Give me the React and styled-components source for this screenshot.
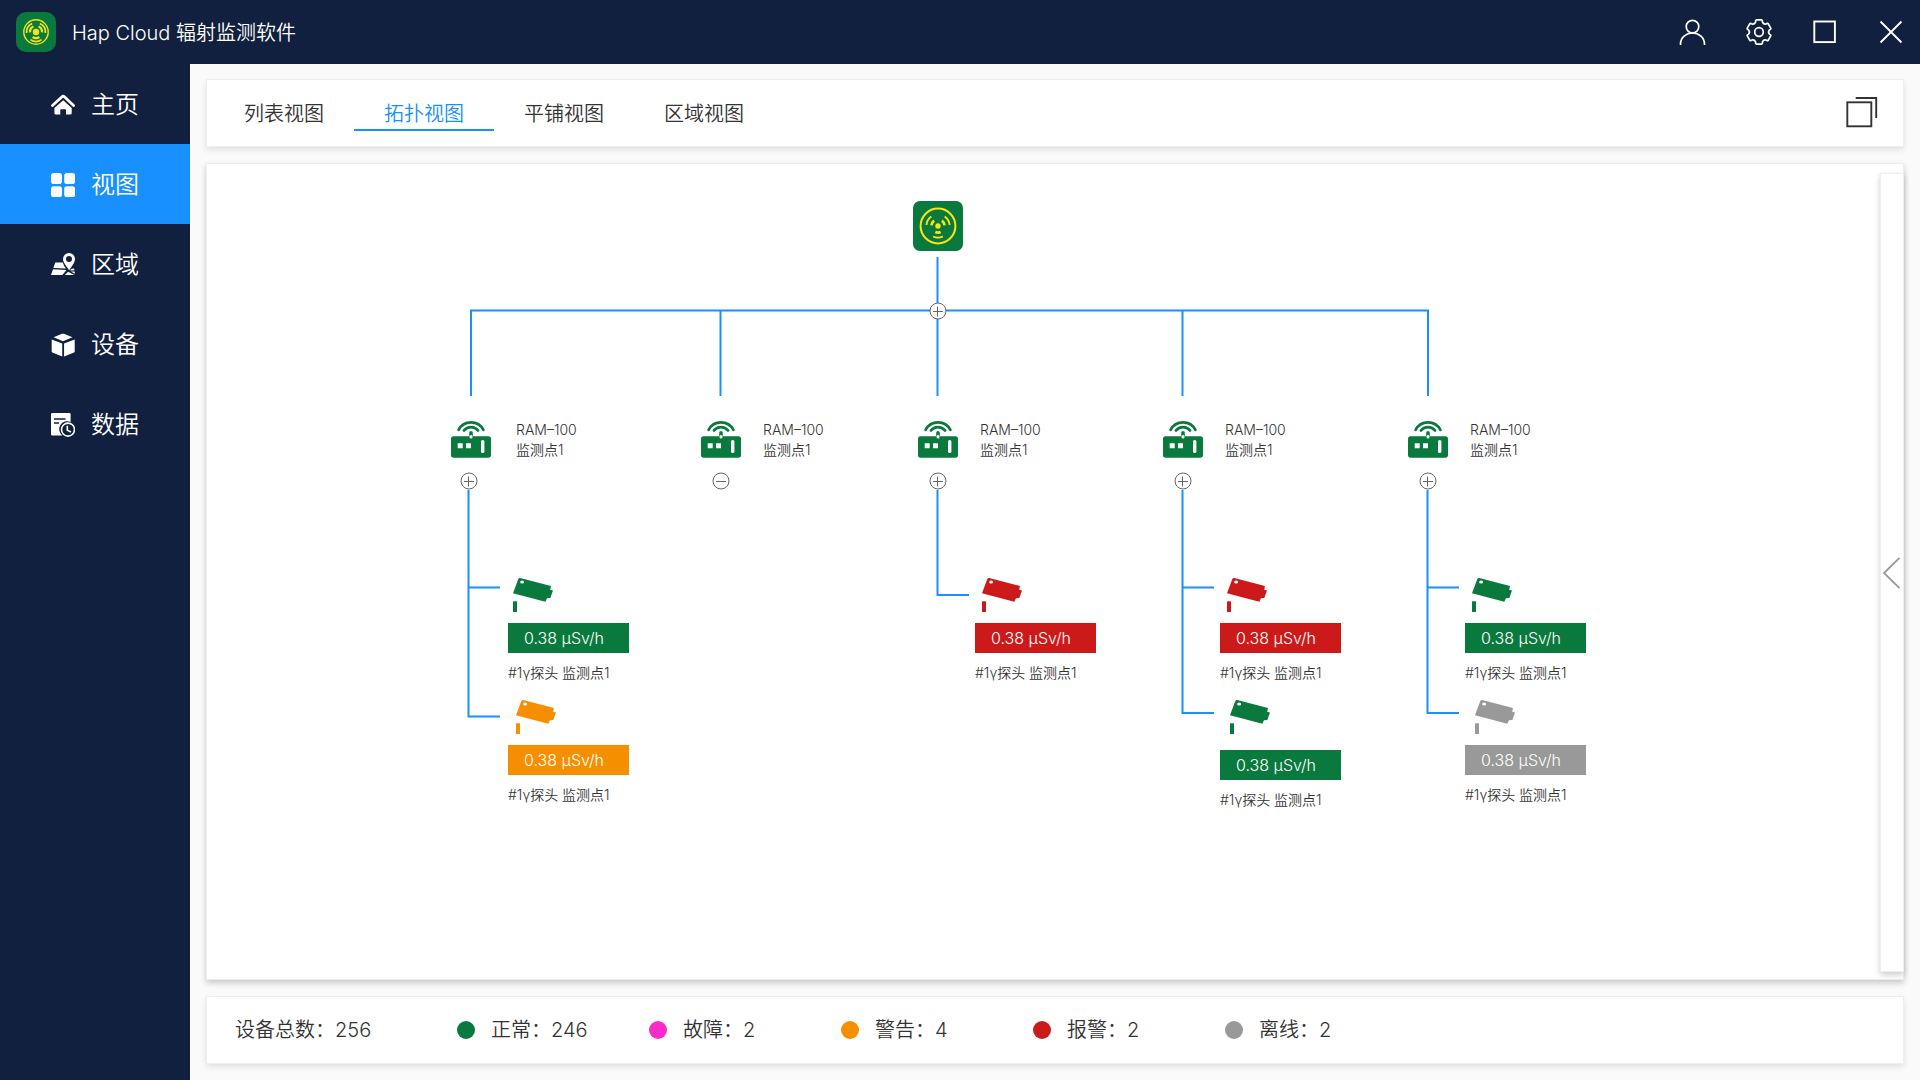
import React, { useState } from 'react';
import styled, { createGlobalStyle } from 'styled-components';

const colors = {
  navy: '#11203e',
  blue: '#1890ff',
  text: '#333333',
  normal: '#0a793e',
  fault: '#f82bc8',
  warning: '#f58f00',
  alarm: '#cc1a1a',
  offline: '#999999'
};

const GlobalStyle = createGlobalStyle`
  *, *::before, *::after {
    box-sizing: border-box;
  }

  body {
    margin: 0;
    color: ${colors.text};
    background: #fafafa;
    font-family: Inter, 'Noto Sans CJK SC', sans-serif;
    font-weight: 350;
  }

  button {
    padding: 0;
    border: 0;
    background: none;
    color: inherit;
    font: inherit;
    cursor: pointer;
  }

  svg {
    display: block;
  }
`;

const Page = styled.div`
  display: flex;
  flex-direction: column;
  min-height: 100vh;
`;

const Header = styled.header`
  display: flex;
  align-items: center;
  height: 64px;
  padding: 0 16px;
  color: white;
  background: ${colors.navy};
`;

const Title = styled.h1`
  flex: 1;
  margin: 0 0 0 16px;
  padding-top: 1px;
  font-size: 20px;
  line-height: 28px;
  font-weight: inherit;
`;

const WindowButtons = styled.div`
  display: flex;
  align-items: center;
  gap: 40px;
`;

const Body = styled.div`
  display: flex;
  flex: 1;
`;

const Sidebar = styled.nav`
  flex: none;
  width: 190px;
  background: ${colors.navy};
`;

const SidebarLink = styled.a`
  display: flex;
  align-items: center;
  gap: 16px;
  height: 80px;
  padding-top: 2px;
  padding-left: 51px;
  color: white;
  background: ${props => (props.$active ? colors.blue : 'transparent')};
  font-size: 24px;
  line-height: 32px;
  text-decoration: none;
`;

const Main = styled.main`
  display: flex;
  flex: 1;
  flex-direction: column;
  gap: 16px;
  min-width: 0;
  padding: 15px 16px 16px;
`;

const Card = styled.section`
  border: 1px solid #eeeeee;
  background: white;
  box-shadow: 0 3px 6px rgba(0, 0, 0, 0.1);
`;

const TabBar = styled(Card)`
  display: flex;
  align-items: center;
  justify-content: space-between;
  height: 68px;
  padding: 0 25px 0 7px;
`;

const Tabs = styled.div`
  display: flex;
`;

const Tab = styled.button`
  width: 140px;
  height: 36px;
  padding-top: 3px;
  border-bottom: 2px solid
    ${props => (props.$active ? colors.blue : 'transparent')};
  color: ${props => (props.$active ? colors.blue : colors.text)};
  font-size: 20px;
  line-height: 28px;
`;

const CanvasCard = styled(Card)`
  display: flex;
  flex: 1;
  box-shadow: 0 3px 6px rgba(0, 0, 0, 0.2);
`;

const Canvas = styled.div`
  position: relative;
  flex: 1;
  min-height: 660px;
`;

const Links = styled.svg`
  position: absolute;
  left: 0;
  top: 0;
`;

const Node = styled.div`
  position: absolute;
  left: ${props => props.$x}px;
  top: ${props => props.$y}px;
`;

const Station = styled(Node)`
  display: flex;
  gap: ${props => props.$gap}px;
`;

const StationName = styled.div`
  font-size: 14px;
  line-height: 20px;
  white-space: nowrap;
`;

const Toggle = styled.button`
  position: absolute;
  left: ${props => props.$x - 9}px;
  top: ${props => props.$y - 9}px;
`;

const Probe = styled(Node)`
  width: 121px;
`;

const ProbeIcon = styled.div`
  height: ${props => props.$height}px;
  padding-left: ${props => props.$indent}px;
`;

const Reading = styled.div`
  padding-left: 16px;
  color: white;
  background: ${props => props.$color};
  font-size: 16px;
  line-height: 30px;
`;

const ProbeName = styled.div`
  margin-top: 10px;
  font-size: 14px;
  line-height: 20px;
  white-space: nowrap;
`;

const Drawer = styled.button`
  display: flex;
  align-items: center;
  justify-content: center;
  width: 24px;
  margin: 9px -1px 7px 0;
  border: 1px solid #eeeeee;
  background: white;
  box-shadow: 0 3px 6px rgba(0, 0, 0, 0.2);
`;

const StatusBar = styled(Card)`
  display: flex;
  align-items: center;
  height: 68px;
  padding-left: 28px;
  font-size: 20px;
  line-height: 28px;
`;

const Total = styled.div`
  width: 222px;
`;

const Status = styled.div`
  display: flex;
  align-items: center;
  gap: 16px;
  width: 192px;
`;

const Dot = styled.span`
  width: 18px;
  height: 18px;
  border-radius: 50%;
  background: ${props => props.$color};
`;

// arc around (c, c), angles in degrees
const arc = (c, r, from, to) => {
  const rad = Math.PI / 180;
  const point = a =>
    `${(c + r * Math.cos(a * rad)).toFixed(2)} ${(c + r * Math.sin(a * rad)).toFixed(2)}`;
  return `M${point(from)}A${r} ${r} 0 0 1 ${point(to)}`;
};

const Waves = ({ c, r, width, spread }) =>
  [90, 210, 330].map(a => (
    <path key={a} d={arc(c, r, a - spread, a + spread)} strokeWidth={width} />
  ));

const SmallLogo = () => (
  <svg width='40' height='40' fill='none' stroke='#f5e416'>
    <rect width='40' height='40' rx='10' fill={colors.normal} stroke='none' />
    <circle cx='20' cy='20' r='12.2' strokeWidth='1.4' />
    <circle cx='20' cy='20' r='3.2' fill='#f5e416' stroke='none' />
    <Waves c={20} r={6} width={2.2} spread={34} />
    <Waves c={20} r={9.4} width={1.7} spread={36} />
  </svg>
);

const LargeLogo = () => (
  <svg width='50' height='50' fill='none' stroke='#fbe512'>
    <rect width='50' height='50' rx='7' fill={colors.normal} stroke='none' />
    <circle cx='25' cy='25' r='17.4' strokeWidth='2' />
    <circle cx='25' cy='25' r='2.7' fill='#fbe512' stroke='none' />
    <Waves c={25} r={6.6} width={2.6} spread={24} />
    <Waves c={25} r={11.6} width={1.9} spread={25} />
  </svg>
);

const UserIcon = () => (
  <svg width='27' height='27' fill='none' stroke='white' strokeWidth='1.7'>
    <circle cx='13.5' cy='7.6' r='6.3' />
    <path d='M1.5 26v-.8C1.5 18.7 7 14 13.5 14s12 4.700 12 11.200v.8' />
  </svg>
);

const gearPath = () => {
  const at = (deg, r) => {
    const a = (deg * Math.PI) / 180;
    return `${(13 + r * Math.cos(a)).toFixed(2)} ${(13 + r * Math.sin(a)).toFixed(2)}`;
  };
  const teeth = [-90, -30, 30, 90, 150, 210].map(
    (t, i) =>
      `${i ? 'L' : 'M'}${at(t - 13, 12.4)}L${at(t + 13, 12.4)}Q${at(t + 18, 12)} ${at(t + 18, 10.8)}Q${at(t + 30, 8.6)} ${at(t + 42, 10.8)}Q${at(t + 42, 12)} ${at(t + 47, 12.4)}`
  );
  return `${teeth.join('')}Z`;
};

const GearIcon = () => (
  <svg
    width='26'
    height='26'
    fill='none'
    stroke='white'
    strokeWidth='1.7'
    strokeLinejoin='round'
    overflow='visible'
  >
    <path d={gearPath()} />
    <circle cx='13' cy='13' r='4.3' />
  </svg>
);

const MaximizeIcon = () => (
  <svg width='26' height='26' fill='none' stroke='white' strokeWidth='1.9'>
    <rect x='2.3' y='2.5' width='20.6' height='20.6' />
  </svg>
);

const CloseIcon = () => (
  <svg width='26' height='26' fill='none' stroke='white' strokeWidth='1.8'>
    <path d='M2.5 2.5l21 21M23.5 2.5l-21 21' />
  </svg>
);

const HomeIcon = () => (
  <svg width='24' height='24' viewBox='0 0 24 24' fill='white'>
    <path
      d='M1.5 12.500L11 3.800q1.200-1 2.400 0L22.600 12.500'
      fill='none'
      stroke='white'
      strokeWidth='2.8'
      strokeLinecap='round'
    />
    <path d='M12.200 7.300L20.700 15V20q0 1.500-1.500 1.500H15V17q0-.7-.7-.7H10q-.7 0-.7.7v4.500H4.900q-1.500 0-1.500-1.500V15z' />
  </svg>
);

const GridIcon = () => (
  <svg width='24' height='24' fill='white'>
    <rect width='11' height='11' rx='2.8' />
    <rect x='13.2' width='11' height='11' rx='2.8' />
    <rect y='13.2' width='11' height='11' rx='2.8' />
    <rect x='13.2' y='13.2' width='11' height='11' rx='2.8' />
  </svg>
);

const MapIcon = () => (
  <svg width='24' height='24' viewBox='0 0 24 24' fill='white'>
    <path d='M4.300 9.500h7.500q.8 3.200 3.200 6L2.300 14.900z' />
    <path d='M2 16.200l13.500.7L11.400 22H0z' />
    <path d='M17.200 18.800l6.200 3.200H13.800z' />
    <path d='M20.200 16l2.800-.4.500 1.700-4.500.3zM19.800 18.600l3.800-.2.400 2.400z' />
    <path
      fillRule='evenodd'
      d='M18 0a6 6 0 0 1 6 6c0 3.600-3.500 7.500-5.800 11.200C16 13.800 12 9.800 12 6a6 6 0 0 1 6-6zm0 3a3 3 0 1 0 0 6 3 3 0 0 0 0-6z'
    />
  </svg>
);

const BoxIcon = () => (
  <svg width='24' height='24' viewBox='0 0 25 24' fill='white'>
    <path d='M2.700 4L11.500.4q1-.4 2 0L22.300 4 12.500 8z' />
    <path d='M.7 6.200L11.700 10.400V24L1.400 19.800q-.7-.4-.7-1.200z' />
    <path d='M24.700 6.200L13.600 10.400V24L24 19.800q.7-.4.7-1.200z' />
  </svg>
);

const DataIcon = () => (
  <svg width='24' height='24' viewBox='0 0 24 24'>
    <path
      fill='white'
      d='M1.200 0h17.200q1.200 0 1.200 1.200V9a8 8 0 0 0-8.400 13.500H1.200Q0 22.500 0 21.300V1.200Q0 0 1.200 0z'
    />
    <path d='M3 6h11.500M3 10h5' stroke={colors.navy} strokeWidth='1.6' />
    <circle
      cx='17'
      cy='16.6'
      r='6.5'
      fill={colors.navy}
      stroke='white'
      strokeWidth='1.6'
    />
    <path d='M16.300 12.800v4.400l3.700 1.700' fill='none' stroke='white' strokeWidth='1.6' />
  </svg>
);

const WindowsIcon = () => (
  <svg width='32' height='32' fill='none' stroke={colors.text} strokeWidth='1.9'>
    <rect x='1.3' y='5.3' width='24' height='24' />
    <path d='M9.700 1h20.500v20' />
  </svg>
);

const RouterIcon = () => (
  <svg width='40' height='38' fill='none' stroke={colors.normal}>
    <path
      d='M7.600 9.800a14 14 0 0 1 24.800 0M13 10.400a9 9 0 0 1 14 0'
      strokeWidth='2.800'
      strokeLinecap='round'
    />
    <rect y='16.3' width='40' height='21.4' rx='2.6' fill={colors.normal} stroke='none' />
    <path d='M20 12.800v3.600' strokeWidth='3.600' strokeLinecap='round' />
    <path d='M20 16.400v.5' stroke='white' strokeWidth='3' strokeLinecap='round' />
    <path d='M6.700 23.300h5v5h-5zM15 23.300h5v5h-5z' fill='white' stroke='none' />
    <rect x='30' y='20' width='3.4' height='13' rx='1.6' fill='white' stroke='none' />
  </svg>
);

const CameraIcon = ({ color }) => (
  <svg width='40' height='34' fill={color}>
    <path d='M7.200 0L38 7.900 37.200 11.700 40 12.600 37.300 20 34 20.200 32.300 23.700 0 15.200 5.200 1.300Q5.700-.2 7.200 0z' />
    <ellipse cx='9.1' cy='4.1' rx='2' ry='1.5' fill='white' />
    <path d='M0 23.300h4V34H0z' />
  </svg>
);

const ToggleIcon = ({ open }) => (
  <svg width='18' height='18' fill='none' stroke='#666666'>
    <circle cx='9' cy='9' r='8' fill='white' />
    <path d={open ? 'M4 9.500h10' : 'M4 9.500h10M8.500 4.500v10'} />
  </svg>
);

const ChevronIcon = () => (
  <svg width='18' height='32' fill='none' stroke='#999999' strokeWidth='1.8'>
    <path d='M16.500 .8L1 16 16.500 31.200' />
  </svg>
);

const menu = [
  { label: '主页', icon: <HomeIcon /> },
  { label: '视图', icon: <GridIcon />, active: true },
  { label: '区域', icon: <MapIcon /> },
  { label: '设备', icon: <BoxIcon /> },
  { label: '数据', icon: <DataIcon /> }
];

const tabs = ['列表视图', '拓扑视图', '平铺视图', '区域视图'];

const statuses = [
  { label: '正常', count: 246, color: colors.normal },
  { label: '故障', count: 2, color: colors.fault },
  { label: '警告', count: 4, color: colors.warning },
  { label: '报警', count: 2, color: colors.alarm },
  { label: '离线', count: 2, color: colors.offline }
];

// positions are relative to the top left corner of the canvas
const stations = [
  { x: 244, toggle: 262, gap: 25 },
  { x: 494, toggle: 514, gap: 22, open: true },
  { x: 711, toggle: 731, gap: 22 },
  { x: 956, toggle: 976, gap: 22 },
  { x: 1201, toggle: 1221, gap: 22 }
];

const probes = [
  { x: 301, y: 414, indent: 5, color: colors.normal },
  { x: 301, y: 536, indent: 8, color: colors.warning },
  { x: 768, y: 414, indent: 7, color: colors.alarm },
  { x: 1013, y: 414, indent: 7, color: colors.alarm },
  { x: 1013, y: 536, indent: 10, space: 50, color: colors.normal },
  { x: 1258, y: 414, indent: 7, color: colors.normal },
  { x: 1258, y: 536, indent: 10, color: colors.offline }
];

const links = [
  'M730.5 93V232',
  'M264 232V146.5H1221V232',
  'M513.5 147V232',
  'M975.5 147V232',
  'M261.5 326V552.5H293M262 423.5H293',
  'M730.5 326V431H762',
  'M975.5 326V549H1007M976 423.5H1007',
  'M1220.5 326V549H1252M1221 423.5H1252'
];

const Topology = () => (
  <Canvas>
    <Links width='1300' height='600' fill='none' stroke={colors.blue} strokeWidth='2'>
      {links.map(d => (
        <path key={d} d={d} />
      ))}
    </Links>
    <Node $x={706} $y={37}>
      <LargeLogo />
    </Node>
    <Toggle $x={731} $y={147} aria-label='展开'>
      <ToggleIcon />
    </Toggle>
    {stations.map(station => (
      <React.Fragment key={station.x}>
        <Station $x={station.x} $y={256} $gap={station.gap}>
          <RouterIcon />
          <StationName>
            RAM–100
            <br />
            监测点1
          </StationName>
        </Station>
        <Toggle $x={station.toggle} $y={317} aria-label='展开'>
          <ToggleIcon open={station.open} />
        </Toggle>
      </React.Fragment>
    ))}
    {probes.map(probe => (
      <Probe key={`${probe.x}-${probe.y}`} $x={probe.x} $y={probe.y}>
        <ProbeIcon $indent={probe.indent} $height={probe.space || 45}>
          <CameraIcon color={probe.color} />
        </ProbeIcon>
        <Reading $color={probe.color}>0.38 µSv/h</Reading>
        <ProbeName>#1γ探头 监测点1</ProbeName>
      </Probe>
    ))}
  </Canvas>
);

export default function App() {
  const [tab, setTab] = useState('拓扑视图');

  return (
    <Page>
      <GlobalStyle />
      <Header>
        <SmallLogo />
        <Title>Hap Cloud 辐射监测软件</Title>
        <WindowButtons>
          <button aria-label='用户'>
            <UserIcon />
          </button>
          <button aria-label='设置'>
            <GearIcon />
          </button>
          <button aria-label='最大化'>
            <MaximizeIcon />
          </button>
          <button aria-label='关闭'>
            <CloseIcon />
          </button>
        </WindowButtons>
      </Header>
      <Body>
        <Sidebar>
          {menu.map(item => (
            <SidebarLink key={item.label} href='#' $active={item.active}>
              {item.icon}
              {item.label}
            </SidebarLink>
          ))}
        </Sidebar>
        <Main>
          <TabBar>
            <Tabs>
              {tabs.map(name => (
                <Tab key={name} $active={name === tab} onClick={() => setTab(name)}>
                  {name}
                </Tab>
              ))}
            </Tabs>
            <button aria-label='新窗口'>
              <WindowsIcon />
            </button>
          </TabBar>
          <CanvasCard>
            <Topology />
            <Drawer aria-label='展开面板'>
              <ChevronIcon />
            </Drawer>
          </CanvasCard>
          <StatusBar>
            <Total>设备总数：256</Total>
            {statuses.map(status => (
              <Status key={status.label}>
                <Dot $color={status.color} />
                {status.label}：{status.count}
              </Status>
            ))}
          </StatusBar>
        </Main>
      </Body>
    </Page>
  );
}
